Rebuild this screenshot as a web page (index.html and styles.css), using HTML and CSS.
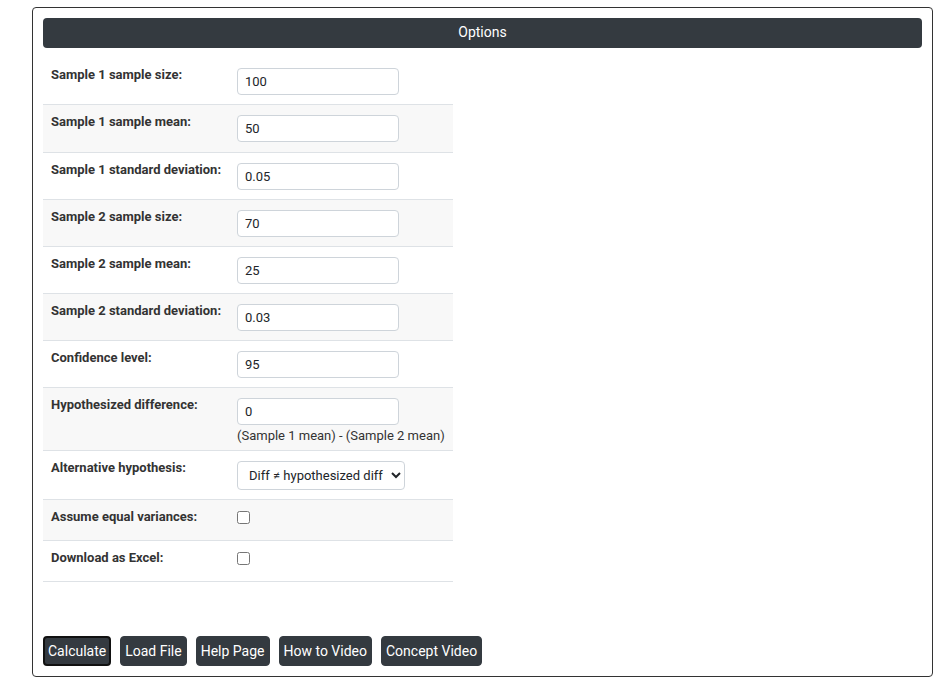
FILE: index.html
```html
<!DOCTYPE html>
<html lang="en">
<head>
	<meta charset="UTF-8">
	<title>Two sample t-test</title>
	<link rel="stylesheet" href="styles.css">
</head>
<body>
	<div class="panel">
		<div class="panel-title">Options</div>
		<table class="opts">
			<colgroup>
				<col class="c-lbl">
				<col class="c-val">
			</colgroup>
			<tr>
				<td class="lbl">Sample 1 sample size:</td>
				<td><input type="text" class="txt" value="100"></td>
			</tr>
			<tr class="tall">
				<td class="lbl">Sample 1 sample mean:</td>
				<td><input type="text" class="txt" value="50"></td>
			</tr>
			<tr>
				<td class="lbl">Sample 1 standard deviation:</td>
				<td><input type="text" class="txt" value="0.05"></td>
			</tr>
			<tr>
				<td class="lbl">Sample 2 sample size:</td>
				<td><input type="text" class="txt" value="70"></td>
			</tr>
			<tr>
				<td class="lbl">Sample 2 sample mean:</td>
				<td><input type="text" class="txt" value="25"></td>
			</tr>
			<tr>
				<td class="lbl">Sample 2 standard deviation:</td>
				<td><input type="text" class="txt" value="0.03"></td>
			</tr>
			<tr>
				<td class="lbl">Confidence level:</td>
				<td><input type="text" class="txt" value="95"></td>
			</tr>
			<tr>
				<td class="lbl">Hypothesized difference:</td>
				<td>
					<input type="text" class="txt" value="0">
					<div class="note">(Sample 1 mean) - (Sample 2 mean)</div>
				</td>
			</tr>
			<tr>
				<td class="lbl">Alternative hypothesis:</td>
				<td>
					<select class="sel">
						<option>Diff &ne; hypothesized diff</option>
						<option>Diff &lt; hypothesized diff</option>
						<option>Diff &gt; hypothesized diff</option>
					</select>
				</td>
			</tr>
			<tr class="chk-row">
				<td class="lbl">Assume equal variances:</td>
				<td><input type="checkbox" class="chk"></td>
			</tr>
			<tr class="chk-row">
				<td class="lbl">Download as Excel:</td>
				<td><input type="checkbox" class="chk"></td>
			</tr>
		</table>
		<div class="btns">
			<button class="btn focus">Calculate</button>
			<button class="btn">Load File</button>
			<button class="btn">Help Page</button>
			<button class="btn">How to Video</button>
			<button class="btn">Concept Video</button>
		</div>
	</div>
</body>
</html>
```

FILE: styles.css
```css
*{margin:0;padding:0;box-sizing:border-box;}
body{
	font-family: Roboto, "Liberation Sans", Arial, sans-serif;
	color: #212529;
	background: #fff;
	padding: 7px 16px 10px 32px;
}
.panel{
	border: 1px solid #333;
	border-radius: 4px;
	padding: 10px;
}
.panel-title{
	background: #343a40;
	color: #fff;
	border-radius: 4px;
	height: 30px;
	line-height: 29px;
	text-align: center;
	font-size: 14px;
	margin-bottom: 10px;
}
.opts{
	width: 410px;
	table-layout: fixed;
	border-collapse: collapse;
}
.c-lbl{width: 194px;}
.c-val{width: 216px;}
.opts td{
	border-bottom: 1px solid #dee2e6;
	vertical-align: top;
	padding: 10px 8px 9px 0;
	font-size: 13px;
}
.opts tr:nth-child(even) td{
	background: #f8f8f8;
}
.opts tr.tall td{
	padding-bottom: 10px;
}
.opts td.lbl{
	font-weight: bold;
	line-height: 15px;
	padding: 9px 8px 9px 8px;
	color: #333;
}
.txt{
	width: 162px;
	height: 27px;
	border: 1px solid #ced4da;
	border-radius: 4px;
	padding: 0 7px;
	font-family: inherit;
	font-size: 13px;
	color: #212529;
	display: block;
}
.note{
	font-size: 13px;
	margin-top: 3px;
	line-height: 16px;
	color: #333;
	margin-bottom: -3px;
	white-space: nowrap;
}
.sel{
	width: 168px;
	height: 29px;
	border: 1px solid #ced4da;
	border-radius: 4px;
	padding: 0 4px 0 7px;
	font-family: inherit;
	font-size: 13px;
	color: #212529;
	background: #fff;
}
.chk-row td{
	padding-top: 10px;
	padding-bottom: 10px;
	height: 41px;
}
.chk{
	width: 13px;
	height: 13px;
	margin-top: 1px;
}
.btns{
	display: flex;
	gap: 9px;
	margin-top: 54px;
}
.btn{
	background: #343a40;
	color: #fff;
	border: 1px solid #343a40;
	border-radius: 4px;
	height: 30px;
	padding: 0 4px;
	font-family: inherit;
	font-size: 14px;
}
.btn.focus{
	border: 2px solid #111;
	padding: 0 3px;
}
```
